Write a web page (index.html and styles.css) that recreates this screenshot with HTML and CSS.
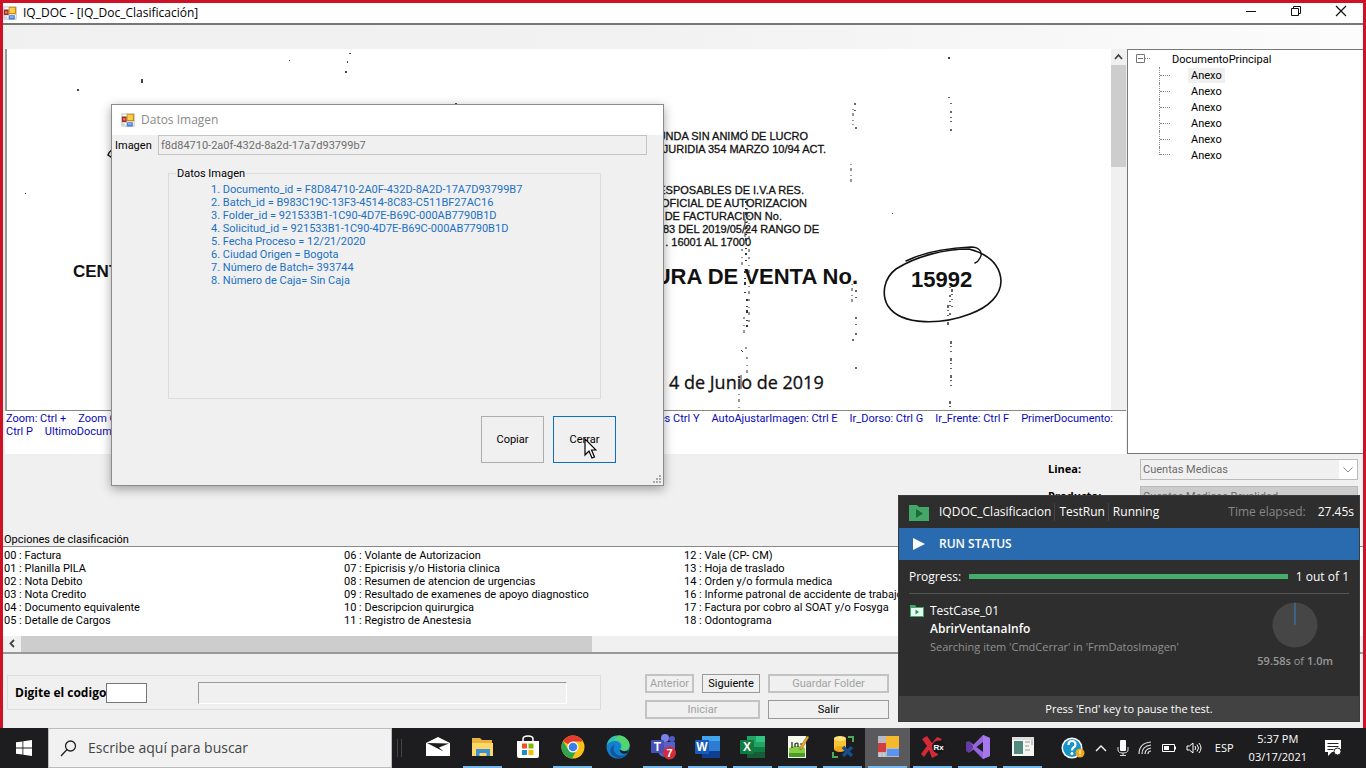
FILE: index.html
```html
<!DOCTYPE html>
<html lang="es">
<head>
<meta charset="utf-8">
<title>IQ_DOC - [IQ_Doc_Clasificación]</title>
<link rel="stylesheet" href="styles.css">
</head>
<body>
<svg width="0" height="0" class="defs" aria-hidden="true">
  <defs>
    <symbol id="form-icon" viewBox="0 0 16 16">
      <rect x="1" y="1" width="14" height="14" fill="#fff" stroke="#b9bcc6" stroke-width="1"/>
      <rect x="1" y="4" width="5.500" height="6.500" fill="#9a2f22"/><rect x="2.500" y="6" width="2.500" height="2.500" fill="#e98a6d"/>
      <rect x="6.500" y="1" width="8.500" height="8.500" fill="#c98d12"/><rect x="7.500" y="2" width="6" height="6" fill="#f8cf52"/>
      <path d="M6.500 10.500h7v5h-7z" fill="#4c7fd6"/><path d="M8 11.500h4v2H8z" fill="#8db3f0"/>
      <path d="M1 12h4v2H1z" fill="#c6cad6"/>
    </symbol>
  </defs>
</svg>

<div class="app">
  <header class="titlebar">
    <svg class="title-icon" width="14" height="14"><use href="#form-icon"/></svg>
    <h1 class="title-text">IQ_DOC - [IQ_Doc_Clasificación]</h1>
    <div class="window-buttons">
      <button class="window-button" aria-label="Minimizar"><svg width="12" height="12" viewBox="0 0 12 12"><path d="M1 6.500h10" stroke="#111"/></svg></button>
      <button class="window-button" aria-label="Restaurar"><svg width="12" height="12" viewBox="0 0 12 12" fill="none" stroke="#111"><path d="M1.500 3.500h7v7h-7zM3.500 3.500v-2h7v7h-2"/></svg></button>
      <button class="window-button" aria-label="Cerrar"><svg width="12" height="12" viewBox="0 0 12 12"><path d="M1 1l10 10M11 1L1 11" stroke="#111" stroke-width="1.200"/></svg></button>
    </div>
  </header>
  <div class="menu-strip"></div>

  <main class="workspace">
    <section class="viewer">
      <div class="viewer-frame">
        <svg class="scan" width="100%" height="100%" role="img" aria-label="Documento escaneado">
          <g class="scan-text">
            <text x="66" y="228" class="scan-bold">CENTRO</text>
            <text x="801" y="91" text-anchor="end" class="scan-small">FUNDA SIN ANIMO DE LUCRO</text>
            <text x="819" y="104" text-anchor="end" class="scan-small">JURIDIA 354 MARZO 10/94 ACT.</text>
            <text x="797" y="145" text-anchor="end" class="scan-small">RESPOSABLES DE I.V.A RES.</text>
            <text x="800" y="158" text-anchor="end" class="scan-small">OFICIAL DE AUTORIZACION</text>
            <text x="775" y="171" text-anchor="end" class="scan-small">DE FACTURACION No.</text>
            <text x="812" y="184" text-anchor="end" class="scan-small">83 DEL 2019/05/24 RANGO DE</text>
            <text x="744" y="197" text-anchor="end" class="scan-small">. 16001 AL 17000</text>
            <text x="851" y="235" text-anchor="end" class="scan-large">FACTURA DE VENTA No.</text>
            <text x="904" y="238" class="scan-large">15992</text>
            <text x="662" y="340" class="scan-date">4 de Junio de 2019</text>
          </g>
          <g fill="none" stroke="#111" stroke-linecap="round">
            <path d="M899 212c18-9 42-13 65-14 9 0 12 6 9 11q-2 4-5 5" stroke-width="1.400"/>
            <path d="M962 200c-24 0-53 7-73 20-12 9-15 25-8 37 14 21 56 18 82 8 19-7 31-19 31-33-1-19-17-28-32-32z" stroke-width="1.600"/>
            <path d="M109 100c-4 0-7 3-8 6l3 2M107 103l-1 6" stroke-width="1.500"/>
          </g>
          <path d="M103 108l7-6v9z" fill="#111"/>
          <g fill="none" stroke="#333">
            <path d="M740 150v30M738 170v18" stroke-dasharray="6 3 2 2"/>
            <path d="M739 152v60M738 222v22M740 250v30" stroke-width="2" stroke-dasharray="2 5 1 3 3 7 1 4"/>
            <path d="M742 166v110M735 200v20M737 268v16M740 308v25M732 337v22M739 298v8" stroke-dasharray="2 6 1 4 3 5"/>
            <path d="M736 303l-2-2M734 326v14" stroke-width="1"/>
            <path d="M846 60v16M844 115v20M845 235v22" stroke-dasharray="1 3 3 4"/>
            <path d="M848 54v8M849 78v6M849 241v8M849 268v22M846 290v4M849 318v6" stroke-width="1.500" stroke-dasharray="2 5 1 8"/>
            <path d="M942 48v8M944 54v30M943 238v32" stroke-width="1.500" stroke-dasharray="1 7 2 4 1 3"/>
            <path d="M945 240v18M941 256v20M944 292v50M943 352v10" stroke-width="1.500" stroke-dasharray="3 2 1 4 1 6"/>
          </g>
          <g fill="#444">
            <rect x="70" y="40" width="2" height="2"/><rect x="134" y="30" width="2" height="4"/>
            <rect x="338" y="22" width="2" height="2"/><rect x="340" y="12" width="1" height="2"/><rect x="342" y="4" width="2" height="1"/>
            <rect x="18" y="144" width="1" height="1"/><rect x="282" y="11" width="1" height="1"/><rect x="448" y="54" width="2" height="2"/>
            <rect x="941" y="8" width="2" height="2"/><rect x="739" y="81" width="1" height="2"/><rect x="885" y="164" width="1" height="1"/>
          </g>
        </svg>
        <div class="scroll-vertical">
          <svg width="15" height="16" viewBox="0 0 15 16"><path d="M4 10l3.500-4 3.500 4" fill="none" stroke="#444" stroke-width="1.800"/></svg>
          <div class="scroll-thumb"></div>
        </div>
      </div>
      <div class="shortcuts">
        <p class="shortcut-row"><span>Zoom: Ctrl +</span><span>Zoom Out: Ctrl -</span><span class="shortcut-push">Grises Ctrl Y</span><span>AutoAjustarImagen: Ctrl E</span><span>Ir_Dorso: Ctrl G</span><span>Ir_Frente: Ctrl F</span><span>PrimerDocumento:</span></p>
        <p class="shortcut-row"><span>Ctrl P</span><span>UltimoDocumento: Ctrl U</span></p>
      </div>
    </section>
    <nav class="tree" aria-label="Documentos">
      <div class="tree-root"><svg width="16" height="16" viewBox="0 0 16 16"><path d="M.5 3.500h8v8h-8zM2 7.500h5" fill="none" stroke="#777"/><path d="M9 7.500h6" stroke="#888" stroke-dasharray="1 1"/></svg><span>DocumentoPrincipal</span></div>
      <ul class="tree-list">
        <li><span class="tree-selected">Anexo</span></li>
        <li><span>Anexo</span></li>
        <li><span>Anexo</span></li>
        <li><span>Anexo</span></li>
        <li><span>Anexo</span></li>
        <li><span>Anexo</span></li>
      </ul>
    </nav>
  </main>

  <section class="classification">
    <div class="fields">
      <label class="field-label" for="linea">Linea:</label>
      <div class="select-wrap">
        <select id="linea" class="select" disabled><option>Cuentas Medicas</option></select>
        <svg class="select-arrow" width="18" height="19" viewBox="0 0 18 19"><path d="M0 0h18v19H0z" fill="#fff"/><path d="M4.500 7.500L9 12l4.500-4.500" fill="none" stroke="#888"/></svg>
      </div>
      <label class="field-label" for="producto">Producto:</label>
      <select id="producto" class="select select-dark" disabled><option>Cuentas Medicas Revalidad</option></select>
    </div>
    <h2 class="options-title">Opciones de clasificación</h2>
  </section>

  <section class="options">
    <ul class="options-list">
      <li>00 : Factura</li><li>01 : Planilla PILA</li><li>02 : Nota Debito</li><li>03 : Nota Credito</li><li>04 : Documento equivalente</li><li>05 : Detalle de Cargos</li>
      <li>06 : Volante de Autorizacion</li><li>07 : Epicrisis y/o Historia clinica</li><li>08 : Resumen de atencion de urgencias</li><li>09 : Resultado de examenes de apoyo diagnostico</li><li>10 : Descripcion quirurgica</li><li>11 : Registro de Anestesia</li>
      <li>12 : Vale (CP- CM)</li><li>13 : Hoja de traslado</li><li>14 : Orden y/o formula medica</li><li>16 : Informe patronal de accidente de trabajo</li><li>17 : Factura por cobro al SOAT y/o Fosyga</li><li>18 : Odontograma</li>
    </ul>
    <div class="scroll-horizontal">
      <svg width="18" height="15" viewBox="0 0 18 15"><path d="M11 4L7.500 7.500 11 11" fill="none" stroke="#444" stroke-width="1.800"/></svg>
      <div class="scroll-thumb-wide"></div>
    </div>
  </section>

  <footer class="actions">
    <div class="code-group">
      <label class="code-label" for="codigo">Digite el codigo</label>
      <input id="codigo" class="code-input" type="text">
      <input class="code-description" type="text" aria-label="Descripción" readonly>
    </div>
    <div class="action-buttons">
      <button class="button" disabled>Anterior</button>
      <button class="button">Siguiente</button>
      <button class="button" disabled>Guardar Folder</button>
      <button class="button button-wide" disabled>Iniciar</button>
      <button class="button">Salir</button>
    </div>
  </footer>
</div>

<div class="dialog" role="dialog" aria-labelledby="dialog-title">
  <header class="dialog-header">
    <svg width="14" height="14"><use href="#form-icon"/></svg>
    <h2 class="dialog-title" id="dialog-title">Datos Imagen</h2>
  </header>
  <div class="dialog-field">
    <label class="dialog-label" for="imagen">Imagen</label>
    <input id="imagen" class="dialog-input" type="text" value="f8d84710-2a0f-432d-8a2d-17a7d93799b7" readonly>
  </div>
  <fieldset class="data-group">
    <legend>Datos Imagen</legend>
    <p>1. Documento_id = F8D84710-2A0F-432D-8A2D-17A7D93799B7</p>
    <p>2. Batch_id = B983C19C-13F3-4514-8C83-C511BF27AC16</p>
    <p>3. Folder_id = 921533B1-1C90-4D7E-B69C-000AB7790B1D</p>
    <p>4. Solicitud_id = 921533B1-1C90-4D7E-B69C-000AB7790B1D</p>
    <p>5. Fecha Proceso = 12/21/2020</p>
    <p>6. Ciudad Origen = Bogota</p>
    <p>7. Número de Batch= 393744</p>
    <p>8. Número de Caja= Sin Caja</p>
  </fieldset>
  <div class="dialog-buttons">
    <button class="dialog-button">Copiar</button>
    <button class="dialog-button dialog-button-focus">Cerrar</button>
  </div>
  <svg class="dialog-grip" width="10" height="10" viewBox="0 0 10 10" fill="#aaa"><path d="M7 1h2v2H7zM7 4h2v2H7zM7 7h2v2H7zM4 4h2v2H4zM4 7h2v2H4zM1 7h2v2H1z"/></svg>
  <svg class="cursor" width="13" height="21" viewBox="0 0 13 21"><path d="M1 1v16l4-4 3 7 2.500-1-3-7H12z" fill="#fff" stroke="#000" stroke-width="1.200"/></svg>
</div>

<aside class="runner">
  <header class="runner-header">
    <svg width="20" height="17" viewBox="0 0 20 17"><path d="M0 1h8l2 2h10v14H0z" fill="#43a867"/><path d="M7 5l7 4.500-7 4.500z" fill="#1c6b3a"/></svg>
    <span>IQDOC_Clasificacion</span><span>TestRun</span><span>Running</span>
    <span class="runner-elapsed">Time elapsed:</span><span class="runner-time">27.45s</span>
  </header>
  <div class="runner-status"><svg width="12" height="14" viewBox="0 0 12 14"><path d="M0 1l12 6-12 6z" fill="#fff"/></svg><h2>RUN STATUS</h2></div>
  <div class="runner-progress"><span>Progress:</span><div class="runner-bar"></div><span>1 out of 1</span></div>
  <div class="runner-body">
    <svg class="runner-case-icon" width="14" height="12" viewBox="0 0 14 12"><path d="M0 0h5l1.500 2H14v10H0z" fill="#43a867"/><path d="M1 3h12v8H1z" fill="#e2fff0"/><path d="M5.500 4.500L9 7l-3.500 2.500z" fill="#279053"/></svg>
    <div class="runner-case">
      <p>TestCase_01</p>
      <p class="runner-step">AbrirVentanaInfo</p>
      <p class="runner-detail">Searching item 'CmdCerrar' in 'FrmDatosImagen'</p>
    </div>
    <div class="runner-timer">
      <svg width="46" height="46" viewBox="0 0 46 46"><circle cx="23" cy="23" r="22.500" fill="#464646"/><path d="M23 23V1" stroke="#3b78ab" stroke-width="1.200"/></svg>
      <span><b>59.58s</b> of <b>1.0m</b></span>
    </div>
  </div>
  <footer class="runner-footer">Press 'End' key to pause the test.</footer>
</aside>

<footer class="taskbar">
  <button class="start" aria-label="Inicio"><svg width="16" height="16" viewBox="0 0 16 16" fill="#fff"><path d="M0 2.300l6.500-.9v6.200H0zM7.300 1.300L16 0v7.600H7.300zM0 8.400h6.500v6.200L0 13.700zM7.300 8.400H16V16l-8.700-1.300z"/></svg></button>
  <div class="search">
    <svg width="17" height="17" viewBox="0 0 17 17" fill="none" stroke="#222" stroke-width="1.300"><circle cx="10.500" cy="6" r="5"/><path d="M7 9.500L1 16"/></svg>
    <input class="search-input" type="text" placeholder="Escribe aquí para buscar" aria-label="Escribe aquí para buscar">
  </div>
  <div class="separator"></div>
  <nav class="apps">
    <button class="app-button" aria-label="Correo"><svg width="26" height="24" viewBox="0 0 26 24"><path d="M1 8l12-6 12 6v13H1z" fill="#fff"/><path d="M2 8l22 .4-10 4.200 4.500 4z" fill="#1d1d1f"/></svg></button>
    <button class="app-button running" aria-label="Explorador"><svg width="24" height="24" viewBox="0 0 24 24"><path d="M1 3h8l2 2h10v16H1z" fill="#e9b23d"/><path d="M1 8h21v13H1z" fill="#ffd766"/><path d="M5 14h14v7h-3.500v-3h-7v3H5z" fill="#3d91d2"/></svg></button>
    <button class="app-button" aria-label="Tienda"><svg width="26" height="24" viewBox="0 0 26 24"><path d="M8 7V4q0-3 5-3t5 3v3" fill="none" stroke="#fff" stroke-width="1.500"/><path d="M2 6h22v15q0 2-2 2H4q-2 0-2-2z" fill="#fff"/><path d="M7 8.500h5v5H7z" fill="#f25022"/><path d="M13.500 8.500h5v5h-5z" fill="#7fba00"/><path d="M7 15h5v5H7z" fill="#1b8fd2"/><path d="M13.500 15h5v5h-5z" fill="#ffb900"/></svg></button>
    <button class="app-button running" aria-label="Chrome"><svg width="24" height="24" viewBox="0 0 24 24"><circle cx="12" cy="12" r="11.500" fill="#fbc116"/><path d="M12 12L2.040 6.250A11.500 11.500 0 0 1 22 6.500H12z" fill="#e33b2e"/><path d="M2.040 6.250A11.500 11.500 0 0 0 11 23.500l5-9L12 12 7 14z" fill="#2da44e"/><circle cx="12" cy="12" r="5.500" fill="#fff"/><circle cx="12" cy="12" r="4.300" fill="#3c7fe8"/></svg></button>
    <button class="app-button" aria-label="Edge"><svg width="24" height="24" viewBox="0 0 24 24"><circle cx="12" cy="12" r="11.500" fill="#1180cd"/><path d="M1 10C2 3 8 0 13 .5c6 .5 11 5 10.500 10.500-.5 5-6 5.500-8.500 4-1.500-1 0-2 0-4 0-3-3-5-6-5-3.500 0-6 1.500-8 4z" fill="#35c1b0"/><path d="M13 .5c6 .5 11 5 10.500 10.500-.5 5-6 5.500-8.500 4 3-4 1-10-7-10z" fill="#55d36c"/><path d="M9 9c-3 4-1 10 4 11.500 4 1 7-1 9-3-3 5-9 7-14 4-5-3-5-9 1-12.500z" fill="#15539c"/><path d="M14.500 15c3 2 6 1.500 8 0l-1 3c-4 2-7 0-8-3z" fill="#1d1d1f"/></svg></button>
    <button class="app-button running" aria-label="Teams"><svg width="26" height="26" viewBox="0 0 26 26"><circle cx="15" cy="4" r="4" fill="#7b83eb"/><circle cx="22" cy="5" r="3" fill="#5059c9"/><path d="M8 8h17v8q-1 7-9 7-7 0-8-6z" fill="#5961c9"/><rect x="1" y="6" width="13" height="13" rx="1" fill="#4650b7"/><text x="7.500" y="16.500" class="icon-letter" text-anchor="middle">T</text><circle cx="19.500" cy="19" r="6.500" fill="#cf2c3c"/><text x="19.500" y="23" class="icon-badge" text-anchor="middle">7</text></svg></button>
    <button class="app-button running" aria-label="Word"><svg width="26" height="24" viewBox="0 0 26 24"><path d="M7 1h18v22H7z" fill="#2b7cd3"/><path d="M7 1h18v5H7z" fill="#41a5ee"/><path d="M7 16h18v7H7z" fill="#103f91"/><rect x="0" y="5" width="14" height="14" rx="1" fill="#185abd"/><text x="7" y="16" class="icon-letter" text-anchor="middle">W</text></svg></button>
    <button class="app-button running" aria-label="Excel"><svg width="26" height="24" viewBox="0 0 26 24"><path d="M7 1h18v22H7z" fill="#21a366"/><path d="M16 1h9v6h-9z" fill="#33c481"/><path d="M7 12h18v11H7z" fill="#107c41"/><path d="M7 17h18v6H7z" fill="#185c37"/><rect x="0" y="5" width="14" height="14" rx="1" fill="#107c41"/><text x="7" y="16" class="icon-letter" text-anchor="middle">X</text></svg></button>
    <button class="app-button running" aria-label="Notepad++"><svg width="24" height="24" viewBox="0 0 24 24"><path d="M2 1h18v22H2z" fill="#f5faec"/><path d="M3 13q9-4 16 0v9H3z" fill="#87cf45"/><path d="M3 18h16v4H3z" fill="#4c9b26"/><path d="M6 7v6M9 12V9q3-2 3 0v3M14 9h4" stroke="#222" stroke-width="1.200" fill="none"/><path d="M21 1l2 1-7 12-2 1v-3z" fill="#e8ae31" stroke="#73541a" stroke-width=".5"/></svg></button>
    <button class="app-button running" aria-label="SQL Server"><svg width="24" height="24" viewBox="0 0 24 24"><path d="M3 3h12v11H3z" fill="#f9c431"/><ellipse cx="9" cy="3.500" rx="6" ry="2.500" fill="#ffe27e"/><ellipse cx="9" cy="14" rx="6" ry="3" fill="#eda91f"/><path d="M17 1h6v6h-2V3h-4zM1 17v6h6v-2H3v-4z" fill="#4caa58"/><path d="M12 12l9 9M21 12l-9 9" stroke="#174e8a" stroke-width="3.500"/></svg></button>
    <button class="app-button running active" aria-label="IQ_DOC"><svg width="24" height="24" viewBox="0 0 24 24"><rect x="2" y="1" width="21" height="21" fill="#b8b9c2"/><path d="M10 1h13v12H10z" fill="#f4b92e"/><path d="M2 8h8v9H2z" fill="#cf3f40"/><path d="M11 14h12v7H11z" fill="#5b94ee"/><path d="M4 18v4M8 18v4" stroke="#ddd"/></svg></button>
    <button class="app-button running" aria-label="Ranorex"><svg width="26" height="24" viewBox="0 0 26 24"><path d="M2 4l5-3 5 7 5-6 5 2-7 8 3 8-6 3-3-8-5 7-3-3 6-8z" fill="#d52a36"/><circle cx="18.500" cy="12" r="6.500" fill="#15191d"/><text x="18.500" y="15" class="icon-rx" text-anchor="middle">Rx</text></svg></button>
    <button class="app-button running" aria-label="Visual Studio"><svg width="24" height="24" viewBox="0 0 24 24"><path d="M17 0l7 3v18l-7 3L2 9l2-2 13 10V7L4 17l-2-2z" fill="#9466db"/><path d="M0 7l3-1 4 5v2l-4 5-3-2z" fill="#643ba5"/><path d="M17 0l7 3v18l-7 3z" fill="#a777ed"/></svg></button>
    <button class="app-button running" aria-label="Aplicación"><svg width="24" height="22" viewBox="0 0 24 22"><path d="M1 1h22v19H1z" fill="#f5f5f2"/><path d="M3 5h9v13H3z" fill="#508b7d"/><path d="M14 6h5M14 10h4M14 14h5M21 3v6" stroke="#999"/><path d="M1 1h22v3H1z" fill="#ddd"/></svg></button>
  </nav>
  <div class="tray">
    <svg width="24" height="24" viewBox="0 0 24 24"><circle cx="11" cy="12" r="10.500" fill="#fff"/><circle cx="11" cy="12" r="9" fill="#1693c9"/><path d="M7.500 9q0-4 3.500-4t3.500 3.500q0 2-2 3-1.500 1-1.500 3" fill="none" stroke="#fff" stroke-width="2.200"/><circle cx="11" cy="17.500" r="1.500" fill="#fff"/><circle cx="19" cy="17" r="4.500" fill="#f0a81c"/><path d="M19 14v6" stroke="#fff" stroke-dasharray="4 1"/></svg>
    <svg width="14" height="10" viewBox="0 0 14 10"><path d="M2 8l5-5 5 5" fill="none" stroke="#fff" stroke-width="1.300"/></svg>
    <svg width="12" height="18" viewBox="0 0 12 18"><rect x="3" y="1" width="6" height="11" rx="1" fill="#fff"/><path d="M1 8v3q0 3 5 3t5-3V8M6 14v3M3 16.500h6" fill="none" stroke="#ddd"/></svg>
    <svg width="14" height="14" viewBox="0 0 14 14" fill="none" stroke="#ddd" stroke-width="1.200"><path d="M1 13Q1 2 13 1M4 13q0-8 9-9M7 13q0-5 6-6M10 13q0-3 3-3"/></svg>
    <svg width="16" height="10" viewBox="0 0 16 10"><path d="M1.500 1.500h12v7h-12zM14.500 3.500v3" fill="none" stroke="#fff"/><path d="M3 3h5v4H3z" fill="#fff"/></svg>
    <svg width="16" height="14" viewBox="0 0 16 14" fill="none" stroke="#fff"><path d="M1 5h2.500L7 2v10L3.500 9H1zM9 5q1.500 2 0 4M11 3.500q3 3.500 0 7M13 2q4 5 0 10"/></svg>
    <span class="language">ESP</span>
    <time class="clock">5:37 PM<br>03/17/2021</time>
    <svg width="18" height="18" viewBox="0 0 18 18"><path d="M1 1h16v12H8l-4 4v-4H1z" fill="#fff"/><path d="M3.500 4.500h11M3.500 7.500h11M3.500 10.500h6" stroke="#222"/><circle cx="13.500" cy="12.500" r="3.500" fill="#fff" stroke="#222"/></svg>
  </div>
</footer>
</body>
</html>
```
FILE: styles.css
```css
* { box-sizing: border-box; }
body {
  margin: 0;
  height: 100vh;
  display: flex;
  flex-direction: column;
  overflow: hidden;
  position: relative;
  font: 11px/13px Roboto, "Liberation Sans", Arial, sans-serif;
  color: #000;
  background: #f0f0f0;
}
h1, h2, p, ul { margin: 0; padding: 0; font-size: inherit; font-weight: normal; }
ul { list-style: none; }
button, input, select { font: inherit; color: inherit; border-radius: 0; margin: 0; padding: 0; }
.defs { position: absolute; }

.app {
  flex: 1;
  min-height: 0;
  display: flex;
  flex-direction: column;
  border: 3px solid #cf1126;
  border-bottom: 0;
}
.titlebar {
  height: 22px;
  display: flex;
  align-items: center;
  background: #fff;
  border-bottom: 2px solid #777;
  font: 12px/16px "Open Sans", sans-serif;
}
.title-icon { margin: 0 6px 0 0; }
.window-buttons { display: flex; margin-left: auto; align-self: flex-start; }
.window-button { width: 45px; height: 15px; border: 0; background: none; display: grid; place-items: center; }
.menu-strip { height: 24px; background: linear-gradient(90deg, #f0f0f0, #f2f2f2 50%, #fcfcfc); }

.workspace { flex: 1; min-height: 0; display: flex; }
.viewer { flex: 1; min-width: 0; display: flex; flex-direction: column; margin-left: 2px; background: #fff; }
.viewer-frame { flex: 1; min-height: 0; display: flex; border-left: 2px solid #999; border-bottom: 1px solid #888; }
.scan { flex: 1; min-width: 0; display: block; background: #fff; }
.scan-text { fill: #111; font-family: "Liberation Sans", Arial, sans-serif; }
.scan-small { font-size: 11px; stroke: #111; stroke-width: 0.3px; }
.scan-bold { font-size: 17px; font-weight: bold; }
.scan-large { font-size: 22px; font-weight: bold; }
.scan-date { font: 18px "Open Sans", sans-serif; stroke: #111; stroke-width: 0.3px; }
.scroll-vertical { width: 15px; background: #f0f0f0; }
.scroll-vertical svg { display: block; }
.scroll-thumb { height: 102px; background: #cdcdcd; }
.shortcuts { height: 43px; padding: 1px 13px 0 1px; color: #0909b4; }
.shortcut-row { display: flex; gap: 12px; white-space: nowrap; }
.shortcut-push { margin-left: auto; }

.tree { width: 236px; margin-left: 1px; border: 1px solid #777; border-right: 0; background: #fff; padding: 1px 8px; }
.tree-root { display: flex; align-items: center; gap: 20px; height: 16px; }
.tree-list { margin-left: 23px; }
.tree-list li {
  display: flex;
  align-items: center;
  height: 16px;
  border-left: 1px dotted #888;
}
.tree-list li::before { content: ""; width: 10px; border-top: 1px dotted #888; margin-right: 18px; }
.tree-list li:last-child { height: 8px; align-items: flex-end; }
.tree-list li:last-child span { margin-bottom: -8px; }
.tree-list span { padding: 1px 3px; }
.tree-selected { background: #f0f0f0; }

.classification { height: 92px; display: flex; flex-direction: column; justify-content: space-between; }
.fields { display: grid; grid-template-columns: 92px 218px; row-gap: 6px; justify-content: end; padding: 5px 5px 0 0; }
.field-label { font: bold 11px/20px "Open Sans", sans-serif; }
.select-wrap { position: relative; display: flex; }
.select { width: 100%; height: 21px; padding: 0 2px; border: 1px solid #bbb; background: #f0f0f0; color: #6d6d6d; opacity: 1; appearance: none; }
.select-arrow { position: absolute; right: 1px; top: 1px; }
.select-dark { background: #ccc; }
.options-title { padding-left: 1px; margin-top: -20px; }

.options { border-top: 1px solid #888; border-bottom: 2px solid #999; background: #fff; }
.options-list { display: grid; grid-template-rows: repeat(6, 13px); grid-auto-flow: column; grid-auto-columns: 340px; padding: 2px 1px 9px; }
.scroll-horizontal { display: flex; height: 16px; background: #f0f0f0; }
.scroll-thumb-wide { width: 42%; background: #cdcdcd; }

.actions { height: 74px; display: flex; gap: 44px; padding: 20px 4px 0; }
.code-group { width: 594px; height: 35px; margin-top: 1px; border: 1px solid #dcdcdc; display: flex; align-items: center; padding-left: 7px; }
.code-label { font: bold 12px/16px "Open Sans", sans-serif; width: 91px; white-space: nowrap; }
.code-input { width: 41px; height: 20px; border: 1px solid #777; background: #fff; }
.code-description { width: 369px; height: 22px; margin-left: 51px; border: 1px solid #999; border-right-color: #fff; border-bottom-color: #fff; background: #f0f0f0; }
.action-buttons { display: grid; grid-template-columns: 49px 58px 121px; grid-auto-rows: 19px; gap: 7px 8px; }
.button { border: 1px solid #999; background: #f0f0f0; }
.button:disabled { border: 2px solid #c3c3c3; color: #a2a2a2; }
.button-wide { grid-column: span 2; }

.dialog {
  position: absolute;
  left: 111px;
  top: 104px;
  width: 553px;
  height: 382px;
  border: 1px solid #8b8b8b;
  background: #f0f0f0;
  box-shadow: 0 3px 10px rgba(0, 0, 0, 0.35);
}
.dialog-header { height: 30px; display: flex; align-items: center; gap: 6px; padding-left: 9px; background: #fff; }
.dialog-title { font: 12px/16px "Open Sans", sans-serif; color: #8a8a8a; }
.dialog-field { display: flex; align-items: center; padding: 0 16px 0 3px; }
.dialog-label { width: 43px; }
.dialog-input { flex: 1; height: 20px; border: 1px solid #c4c4c4; background: #f0f0f0; color: #6d6d6d; padding: 0 2px; }
.data-group { width: 433px; height: 232px; margin: 12px 0 0 56px; padding: 3px 42px; border: 1px solid #dcdcdc; color: #1b70c4; white-space: nowrap; }
.data-group legend { color: #000; padding: 0 1px; margin-left: -35px; }
.dialog-buttons { display: flex; gap: 9px; justify-content: flex-end; padding: 17px 47px 0 0; }
.dialog-button { width: 63px; height: 47px; border: 1px solid #adadad; background: #f0f0f0; }
.dialog-button-focus { border-color: #0b6fc7; }
.dialog-grip { position: absolute; right: 1px; bottom: 1px; }
.cursor { position: absolute; left: 472px; top: 333px; }

.runner {
  position: absolute;
  right: 6px;
  bottom: 46px;
  width: 462px;
  height: 227px;
  display: flex;
  flex-direction: column;
  border: 1px solid #3c3c3c;
  background: #2e2e2e;
  color: #fff;
  font: 12px/18px "Open Sans", sans-serif;
  white-space: nowrap;
}
.runner-header { height: 32px; display: flex; align-items: center; padding: 0 5px 0 10px; }
.runner-header svg { margin-right: 10px; }
.runner-header span + span { border-left: 1px solid #444; padding-left: 4px; margin-left: 3px; }
.runner-header .runner-elapsed { margin-left: auto; border: 0; color: #888; }
.runner-header .runner-time { border: 0; margin-left: 8px; }
.runner-status { height: 32px; display: flex; align-items: center; gap: 14px; padding-left: 14px; background: #2a6bb0; }
.runner-status h2 { font-weight: 600; }
.runner-progress { height: 34px; margin: 0 10px; display: flex; align-items: center; gap: 8px; border-bottom: 1px solid #555; }
.runner-bar { flex: 1; height: 5px; background: #43ad69; }
.runner-body { flex: 1; display: flex; padding: 8px 26px 0 11px; gap: 6px; }
.runner-case-icon { margin-top: 3px; }
.runner-case { flex: 1; }
.runner-step { font-weight: 600; }
.runner-detail { color: #919191; font-size: 11px; }
.runner-timer { display: flex; flex-direction: column; align-items: center; gap: 4px; color: #999; font-size: 11px; }
.runner-timer b { font-weight: 600; }
.runner-footer { height: 25px; line-height: 25px; text-align: center; background: #424242; font-size: 11px; }

.taskbar { height: 40px; display: flex; background: #1d1d1f; color: #fff; }
.start { width: 48px; border: 0; background: none; display: grid; place-items: center; }
.search { width: 344px; display: flex; align-items: center; gap: 11px; padding-left: 11px; background: #f1f1f1; border: 1px solid #bbb; }
.search-input { flex: 1; min-width: 0; border: 0; background: none; font: 14px/20px "Open Sans", sans-serif; color: #333; }
.search-input::placeholder { color: #444; opacity: 1; }
.separator { width: 5px; height: 18px; margin: 11px 13px 0 5px; border: 1px solid #444; border-width: 0 1px; }
.apps { display: flex; }
.app-button { width: 45px; border: 0; border-bottom: 2px solid transparent; background: none; display: grid; place-items: center; }
.running { border-image: linear-gradient(90deg, transparent 10%, #76b9ed 10%, #76b9ed 90%, transparent 90%) 2; }
.active { background: #5a5a5c; }
.icon-letter { font: bold 12px "Liberation Sans", sans-serif; fill: #fff; }
.icon-badge { font: bold 11px "Liberation Sans", sans-serif; fill: #fff; }
.icon-rx { font: bold 8px "Liberation Sans", sans-serif; fill: #fff; }
.tray { margin-left: auto; display: flex; align-items: center; gap: 9px; padding-right: 24px; }
.language { font: 11px/16px "Open Sans", sans-serif; margin: 0 6px 0 4px; }
.clock { font: 11px/18px "Open Sans", sans-serif; text-align: center; margin-right: 8px; }
```
